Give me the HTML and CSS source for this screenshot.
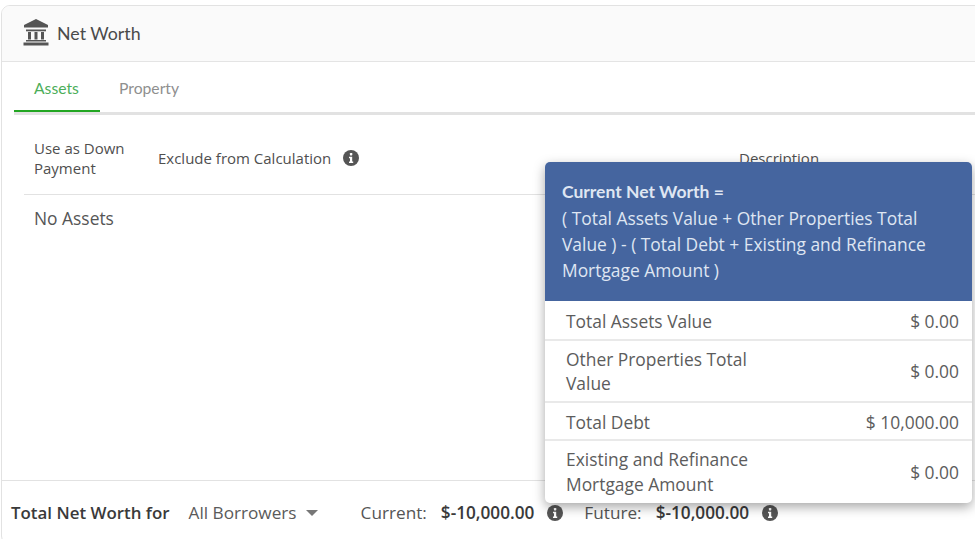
FILE: index.html
```html
<!DOCTYPE html>
<html lang="en">
<head>
<meta charset="utf-8">
<title>Net Worth</title>
<link rel="stylesheet" href="styles.css">
</head>
<body>
<div class="card">
  <header class="card-head">
    <svg class="bank" viewBox="0 0 26 27" width="26" height="27" aria-hidden="true">
      <path d="M13 0 L25 6 V8.5 H1 V6 Z" fill="#555"/>
      <rect x="3" y="10.5" width="20" height="1.8" fill="#555"/>
      <rect x="5" y="13" width="3" height="7.5" fill="#555"/>
      <rect x="11.5" y="13" width="3" height="7.5" fill="#555"/>
      <rect x="18" y="13" width="3" height="7.5" fill="#555"/>
      <rect x="3" y="21" width="20" height="1.5" fill="#555"/>
      <rect x="0.5" y="23.5" width="25" height="3" fill="#555"/>
    </svg>
    <span class="card-title">Net Worth</span>
  </header>
  <nav class="tabs">
    <a class="tab tab-active">Assets</a>
    <a class="tab">Property</a>
  </nav>
  <div class="table-head">
    <div class="col-down">Use as Down Payment</div>
    <div class="col-exclude">Exclude from Calculation
      <svg class="info" viewBox="0 0 16 16" aria-hidden="true"><circle cx="8" cy="8" r="8" fill="#555"/><rect x="6.9" y="3" width="2.4" height="2.4" rx="0.6" fill="#fff"/><path d="M6 6.8H9.2V11.6H10.2V13H6V11.6H7V8.2H6Z" fill="#fff"/></svg>
    </div>
    <div class="col-desc">Description</div>
  </div>
  <div class="empty">No Assets</div>
  <footer class="card-foot">
    <strong class="foot-title">Total Net Worth for</strong>
    <span class="foot-select">All Borrowers <i class="caret"></i></span>
    <span class="foot-label foot-current">Current:</span>
    <strong class="foot-value">$-10,000.00</strong>
    <svg class="info" viewBox="0 0 16 16" aria-hidden="true"><circle cx="8" cy="8" r="8" fill="#555"/><rect x="6.9" y="3" width="2.4" height="2.4" rx="0.6" fill="#fff"/><path d="M6 6.8H9.2V11.6H10.2V13H6V11.6H7V8.2H6Z" fill="#fff"/></svg>
    <span class="foot-label foot-future">Future:</span>
    <strong class="foot-value">$-10,000.00</strong>
    <svg class="info" viewBox="0 0 16 16" aria-hidden="true"><circle cx="8" cy="8" r="8" fill="#555"/><rect x="6.9" y="3" width="2.4" height="2.4" rx="0.6" fill="#fff"/><path d="M6 6.8H9.2V11.6H10.2V13H6V11.6H7V8.2H6Z" fill="#fff"/></svg>
  </footer>
</div>
<aside class="popover">
  <div class="pop-head">
    <strong class="pop-title">Current Net Worth =</strong>
    <p class="pop-formula">( Total Assets Value + Other Properties Total Value ) - ( Total Debt + Existing and Refinance Mortgage Amount )</p>
  </div>
  <div class="pop-row pop-row-1"><span class="pop-label">Total Assets Value</span><span>$ 0.00</span></div>
  <div class="pop-row pop-row-2"><span class="pop-label">Other Properties Total Value</span><span>$ 0.00</span></div>
  <div class="pop-row pop-row-3"><span class="pop-label">Total Debt</span><span>$ 10,000.00</span></div>
  <div class="pop-row pop-row-4"><span class="pop-label">Existing and Refinance Mortgage Amount</span><span>$ 0.00</span></div>
</aside>
</body>
</html>
```
FILE: styles.css
```css
* { box-sizing: border-box; }
html, body { margin: 0; height: 539px; overflow: hidden; background: #fff; }
body { position: relative; font-family: "Open Sans", "Liberation Sans", sans-serif; color: #555; }

.card {
  margin: 5px 0 0 1px;
  height: 540px;
  width: 1000px;
  border: 1px solid #e2e2e2;
  border-radius: 9px;
  display: flex;
  flex-direction: column;
  overflow: hidden;
}
.card-head {
  height: 56px;
  flex: none;
  display: flex;
  align-items: center;
  gap: 8px;
  padding: 0 0 2px 21px;
  background: #fafafa;
  border-bottom: 1px solid #e4e4e4;
}
.bank { display: block; }
.card-title { font-family: Lato, sans-serif; font-size: 17.8px; color: #4a4a4a; }

.tabs {
  height: 53px;
  flex: none;
  margin-left: 12px;
  display: flex;
  border-bottom: 3px solid #e2e2e2;
}
.tab {
  height: 50px;
  padding: 17px 20px 0;
  font-family: Lato, sans-serif;
  font-size: 15.7px;
  color: #8f8f8f;
}
.tab-active { width: 86px; color: #4cae5a; border-bottom: 2px solid #22a622; }
.tab + .tab { padding-left: 19px; }

.table-head {
  height: 80px;
  flex: none;
  margin-left: 22px;
  padding: 6px 0 0 10px;
  display: flex;
  align-items: center;
  border-bottom: 1px solid #e2e2e2;
  font-size: 15px;
  line-height: 20px;
  color: #4f4f4f;
}
.col-down { width: 124px; }
.col-exclude { width: 581px; display: flex; align-items: center; gap: 12px; white-space: nowrap; }
.col-desc { white-space: nowrap; }
.empty { flex: 1; padding: 11px 0 0 32px; font-size: 17.4px; line-height: 24px; }

.info { width: 16px; height: 16px; flex: none; }

.card-foot {
  height: 64px;
  flex: none;
  display: flex;
  align-items: center;
  padding: 0 0 0 9px;
  border-top: 1px solid #e2e2e2;
  font-size: 17.2px;
  white-space: nowrap;
}
.foot-title { font-weight: 600; font-size: 16.9px; color: #3a3a3a; }
.foot-select { margin-left: 19px; display: flex; align-items: center; color: #5a5a5a; }
.caret {
  margin-left: 9px;
  border-left: 6px solid transparent;
  border-right: 6px solid transparent;
  border-top: 6px solid #777;
}
.foot-label { color: #555; }
.foot-current { margin-left: 43px; }
.foot-future { margin-left: 21px; }
.foot-value { margin: 0 13px 0 14px; font-weight: 600; color: #3a3a3a; }

.popover {
  position: absolute;
  left: 545px;
  top: 162px;
  width: 427px;
  height: 341px;
  background: #fff;
  border-radius: 5px;
  overflow: hidden;
  box-shadow: 0 4px 12px rgba(0, 0, 0, 0.35);
  font-size: 17.4px;
  color: #5c5c5c;
}
.pop-head {
  height: 139px;
  padding: 17px 17px 0;
  background: #45659f;
  color: #dfe6f2;
  line-height: 26px;
}
.pop-title { display: block; font-family: Lato, sans-serif; font-size: 17.5px; font-weight: 700; }
.pop-formula { margin: 0; }
.pop-row {
  display: flex;
  align-items: center;
  justify-content: space-between;
  padding: 0 13px 0 21px;
  border-bottom: 2px solid #e9e9e9;
  line-height: 24px;
}
.pop-row:last-child { border-bottom: 0; }
.pop-label { width: 200px; }
.pop-row-1 { height: 40px; padding-top: 1px; }
.pop-row-2 { height: 62px; }
.pop-row-3 { height: 38px; padding-top: 1px; }
.pop-row-4 { height: 62px; }
.pop-row-4 .pop-label { line-height: 25px; }
```
